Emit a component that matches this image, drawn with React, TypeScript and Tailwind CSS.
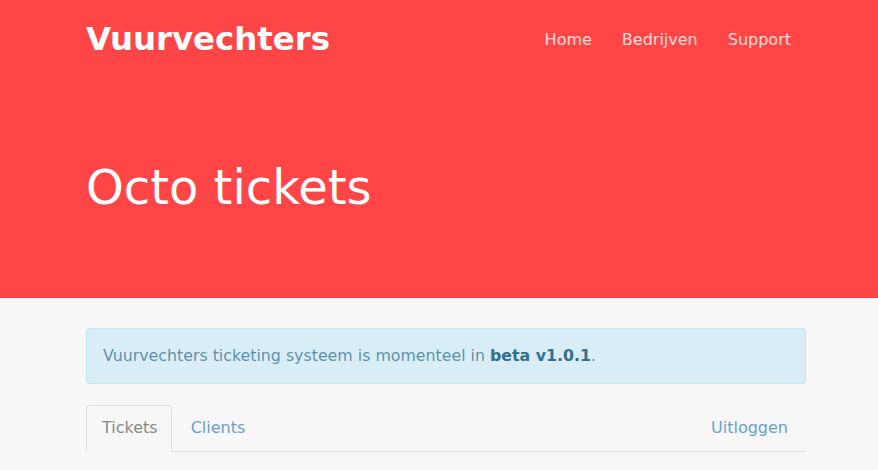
export default function App() {
  return (
    <div
      className="min-h-[470px] bg-[#f7f7f7]"
      style={{ fontFamily: '"DejaVu Sans", sans-serif' }}
    >
      <header className="h-[298px] bg-[#ff4545] text-white">
        <div className="ml-[86px] w-[720px]">
          <nav className="flex h-[79px] items-center justify-between">
            <a className="text-[32.4px] font-bold leading-none">Vuurvechters</a>
            <ul className="mr-[15px] flex gap-[30px] text-[16px] text-white/80">
              <li>Home</li>
              <li>Bedrijven</li>
              <li>Support</li>
            </ul>
          </nav>
          <h1 className="mt-[84px] text-[48px] font-normal leading-none">
            Octo tickets
          </h1>
        </div>
      </header>
      <main className="ml-[86px] w-[720px] pt-[30px]">
        <div className="rounded-[4px] border border-[#bce8f1] bg-[#d9edf7] px-[16px] py-[15px] text-[15.8px] leading-6 text-[#31708f]/75">
          Vuurvechters ticketing systeem is momenteel in{" "}
          <b className="font-bold text-[#31708f]">beta v1.0.1</b>.
        </div>
        <ul className="mt-[21px] flex border-b border-[#ddd] text-[16px] leading-6">
          <li className="-mb-px rounded-t-[4px] border border-[#ddd] border-b-transparent bg-[#f7f7f7] py-[10px] pl-[15px] pr-[13px] text-[#888]">
            Tickets
          </li>
          <li className="py-[11px] pl-[19px] pr-[18px] text-[#6a9fd0]">Clients</li>
          <li className="ml-auto px-[18px] py-[11px] text-[#6a9fd0]">
            Uitloggen
          </li>
        </ul>
      </main>
    </div>
  );
}
